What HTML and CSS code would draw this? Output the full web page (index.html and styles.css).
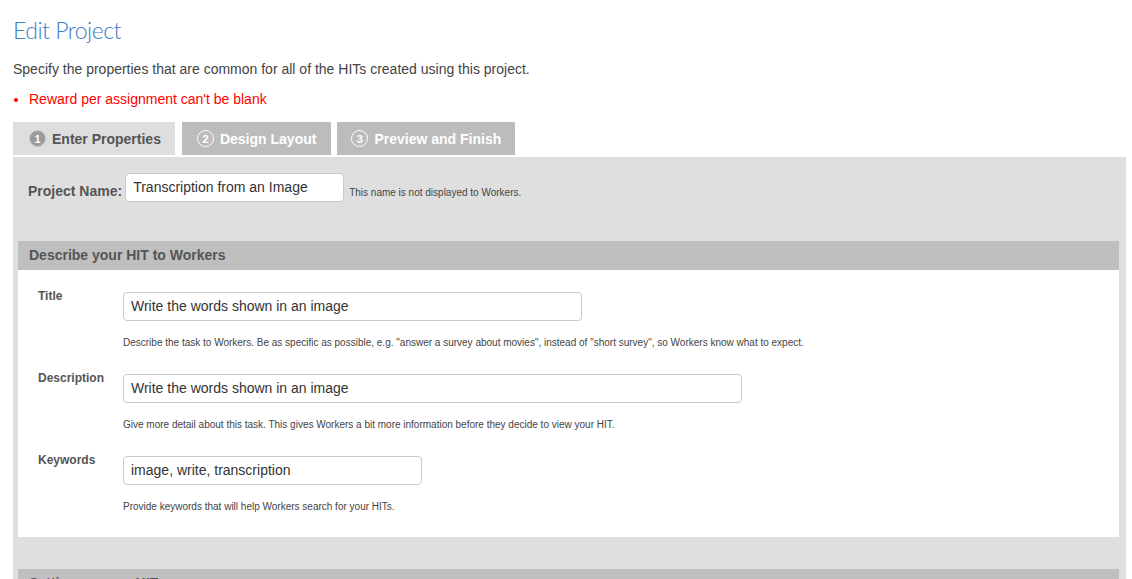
FILE: index.html
```html
<!DOCTYPE html>
<html>
<head>
<meta charset="utf-8">
<title>Edit Project</title>
<link rel="stylesheet" href="styles.css">
</head>
<body>
<div class="page">
  <h1 class="title">Edit Project</h1>
  <p class="intro">Specify the properties that are common for all of the HITs created using this project.</p>
  <ul class="errors">
    <li>Reward per assignment can't be blank</li>
  </ul>
  <div class="tabs">
    <div class="tab tab-active"><span class="num">1</span><span>Enter Properties</span></div>
    <div class="tab"><span class="num">2</span><span>Design Layout</span></div>
    <div class="tab"><span class="num">3</span><span>Preview and Finish</span></div>
  </div>
  <div class="panel">
    <div class="name-row">
      <label class="name-label">Project Name:</label>
      <div class="input name-input">Transcription from an Image</div>
      <span class="name-hint">This name is not displayed to Workers.</span>
    </div>

    <div class="section">
      <div class="section-head">Describe your HIT to Workers</div>
      <div class="section-body">
        <div class="field">
          <div class="field-label">Title</div>
          <div class="field-main">
            <div class="input w-title">Write the words shown in an image</div>
            <div class="hint">Describe the task to Workers. Be as specific as possible, e.g. "answer a survey about movies", instead of "short survey", so Workers know what to expect.</div>
          </div>
        </div>
        <div class="field">
          <div class="field-label">Description</div>
          <div class="field-main">
            <div class="input w-desc">Write the words shown in an image</div>
            <div class="hint">Give more detail about this task. This gives Workers a bit more information before they decide to view your HIT.</div>
          </div>
        </div>
        <div class="field">
          <div class="field-label">Keywords</div>
          <div class="field-main">
            <div class="input w-keys">image, write, transcription</div>
            <div class="hint">Provide keywords that will help Workers search for your HITs.</div>
          </div>
        </div>
      </div>
    </div>

    <div class="section">
      <div class="section-head">Setting up your HIT</div>
      <div class="section-body short"></div>
    </div>
  </div>
</div>
</body>
</html>
```

FILE: styles.css
```css
html, body {
  margin: 0;
  padding: 0;
  background: #ffffff;
}

body {
  font-family: "Liberation Sans", Arial, sans-serif;
  color: #444444;
  overflow: hidden;
}

.page {
  padding: 16px 6px 0 13px;
}

.title {
  margin: 0;
  font-family: Lato, "Liberation Sans", sans-serif;
  font-weight: 300;
  font-size: 23px;
  letter-spacing: -0.5px;
  line-height: 28px;
  color: #3d7bc6;
}

.intro {
  margin: 17px 0 0;
  font-size: 14px;
  line-height: 17px;
  color: #444444;
}

.errors {
  margin: 13px 0 0;
  padding: 0 0 0 16px;
  font-size: 14px;
  line-height: 17px;
  color: #ff0000;
}

.tabs {
  display: flex;
  gap: 6px;
  margin-top: 14px;
}

.tab {
  display: flex;
  align-items: center;
  gap: 6px;
  height: 33px;
  padding: 0 14px 0 14px;
  background: #bcbcbc;
  color: #ffffff;
  font-weight: bold;
  font-size: 14px;
}

.tab + .tab + .tab {
  padding: 0 14px;
}

.tab-active + .tab {
  padding: 0 15px;
}

.tab-active {
  background: #dedede;
  color: #555555;
  padding: 0 14px 0 16px;
  margin-right: 1px;
}

.num {
  display: flex;
  align-items: center;
  justify-content: center;
  width: 17px;
  height: 17px;
  box-sizing: border-box;
  border-radius: 50%;
  border: 1px solid #ffffff;
  font-size: 11px;
  font-weight: bold;
  color: #ffffff;
}

.tab-active .num {
  background: #9b9b9b;
  border-color: #c8c8c8;
}

.panel {
  margin-top: 2px;
  background: #dfdfdf;
  padding: 16px 7px 0 5px;
}

.name-row {
  display: flex;
  align-items: center;
  padding-left: 10px;
}

.name-label {
  font-weight: bold;
  font-size: 14px;
  color: #555555;
  padding-top: 6px;
  margin-right: 3px;
}

.input {
  box-sizing: border-box;
  height: 29px;
  background: #ffffff;
  border: 1px solid #c9c9c9;
  border-radius: 4px;
  padding: 0 7px;
  font-size: 14px;
  line-height: 27px;
  color: #333333;
  white-space: nowrap;
  overflow: hidden;
}

.name-input {
  width: 219px;
}

.name-hint {
  font-size: 10px;
  color: #444444;
  margin-left: 5px;
  padding-top: 10px;
}

.section {
  margin-top: 39px;
}

.section + .section {
  margin-top: 32px;
}

.section-head {
  height: 29px;
  background: #bfbfbf;
  padding-left: 11px;
  font-weight: bold;
  font-size: 14px;
  line-height: 29px;
  color: #555555;
}

.section-body {
  background: #ffffff;
  padding: 19px 0 0 20px;
  height: 267px;
  box-sizing: border-box;
}

.section-body.short {
  height: 60px;
}

.field {
  display: flex;
  align-items: flex-start;
}

.field-label {
  width: 85px;
  flex: none;
  font-weight: bold;
  font-size: 12px;
  line-height: 14px;
  color: #555555;
}

.field-main {
  padding-top: 3px;
}

.w-title {
  width: 459px;
}

.w-desc {
  width: 619px;
}

.w-keys {
  width: 299px;
}

.hint {
  margin-top: 16px;
  margin-bottom: 22px;
  font-size: 10px;
  line-height: 12px;
  color: #444444;
}
```
